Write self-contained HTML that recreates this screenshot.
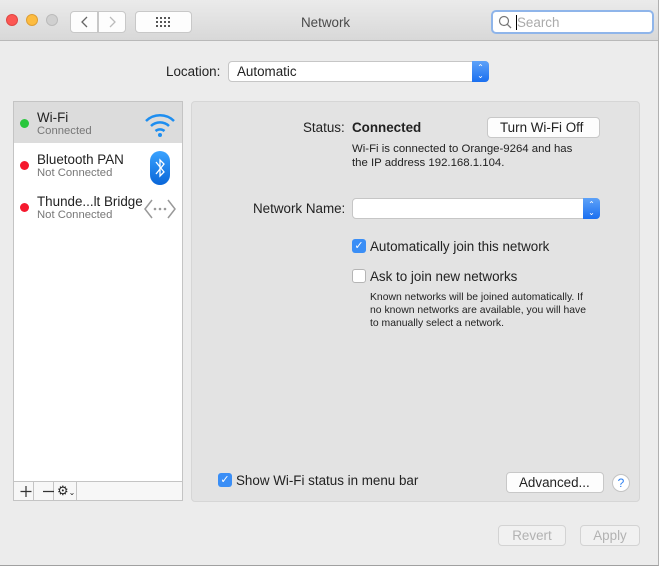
<!DOCTYPE html>
<html><head><style>
*{box-sizing:border-box;margin:0;padding:0}
body{width:665px;height:567px;background:#fff;font-family:"Liberation Sans",sans-serif;font-size:13.4px;color:#222;position:relative;overflow:hidden}
.win{position:absolute;left:0;top:0;width:659px;height:566px;background:#ececec;border-right:1px solid #b0b0b0;border-bottom:1px solid #a0a0a0;overflow:hidden}
.tb{position:absolute;left:0;top:0;width:100%;height:41px;background:linear-gradient(#ebebeb,#d8d8d8);border-bottom:1px solid #b9b9b9}
.dot{position:absolute;top:14px;width:12px;height:12px;border-radius:50%}
.btn{position:absolute;background:#fdfdfd;border:1px solid #c8c8c8;border-radius:4px}
.a{position:absolute;white-space:nowrap}
.cb{position:absolute;width:14px;height:14px;border-radius:3px}
</style></head><body><div class="win">
<div class="tb">
<div class="dot" style="left:6px;background:#fc5753;border:1px solid #df4744"></div>
<div class="dot" style="left:26px;background:#fdbc40;border:1px solid #de9f34"></div>
<div class="dot" style="left:46px;background:#d0d0d0;border:1px solid #bbb"></div>
<div class="btn" style="left:70px;top:11px;width:28px;height:22px;border-radius:4px 0 0 4px"></div>
<div class="btn" style="left:98px;top:11px;width:28px;height:22px;border-radius:0 4px 4px 0"></div>
<svg class="a" style="left:70px;top:11px" width="56" height="22"><path d="M17 6 L12 11 L17 16" fill="none" stroke="#666" stroke-width="1.3"/><path d="M40 6 L45 11 L40 16" fill="none" stroke="#bbb" stroke-width="1.3"/></svg>
<div class="btn" style="left:135px;top:11px;width:57px;height:22px"></div>
<svg class="a" style="left:155px;top:16px" width="16" height="12" fill="#555"><rect x="1" y="1" width="2" height="2"/><rect x="5" y="1" width="2" height="2"/><rect x="9" y="1" width="2" height="2"/><rect x="13" y="1" width="2" height="2"/><rect x="1" y="5" width="2" height="2"/><rect x="5" y="5" width="2" height="2"/><rect x="9" y="5" width="2" height="2"/><rect x="13" y="5" width="2" height="2"/><rect x="1" y="9" width="2" height="2"/><rect x="5" y="9" width="2" height="2"/><rect x="9" y="9" width="2" height="2"/><rect x="13" y="9" width="2" height="2"/></svg>
<div class="a" style="left:301px;top:15px;color:#4a4a4a">Network</div>
<div class="a" style="left:491px;top:10px;width:163px;height:24px;background:#fff;border:2px solid #8fb5ea;border-radius:5px"></div>
<svg class="a" style="left:498px;top:15px" width="14" height="14"><circle cx="6" cy="6" r="4.5" fill="none" stroke="#777" stroke-width="1.2"/><line x1="9.3" y1="9.3" x2="13" y2="13" stroke="#777" stroke-width="1.3"/></svg>
<div class="a" style="left:516px;top:15px;width:1px;height:15px;background:#000"></div>
<div class="a" style="left:517px;top:15px;color:#aaa">Search</div>
</div>
<div class="a" style="left:166px;top:64px">Location:</div>
<div class="a" style="left:228px;top:61px;width:261px;height:21px;background:#fff;border:1px solid #c6c6c6;border-radius:4px"></div>
<div class="a" style="left:237px;top:64px">Automatic</div>
<div class="a" style="left:472px;top:61px;width:17px;height:21px;background:linear-gradient(#5ea2f8,#1a6ff0);border-radius:0 4px 4px 0;color:#fff;font-size:8px;text-align:center;line-height:8px;padding-top:3px">⌃<br>⌄</div>

<div class="a" style="left:13px;top:101px;width:170px;height:400px;background:#fff;border:1px solid #c4c4c4"></div>
<div class="a" style="left:14px;top:102px;width:168px;height:41px;background:#dcdcdc"></div>
<div class="dot" style="left:20px;top:119px;width:9px;height:9px;background:#29c63d"></div>
<div class="a" style="left:37px;top:110px">Wi-Fi</div><div class="a" style="left:37px;top:125px;font-size:11.3px;color:#777">Connected</div>
<svg class="a" style="left:144px;top:112px" width="32" height="26"><g fill="none" stroke="#1e8ef0" stroke-width="2.5"><path d="M2 9 A20 20 0 0 1 30 9"/><path d="M7 14 A13 13 0 0 1 25 14"/><path d="M11.5 19 A7 7 0 0 1 20.5 19"/></g><circle cx="16" cy="23" r="2" fill="#1e8ef0"/></svg>
<div class="dot" style="left:20px;top:161px;width:9px;height:9px;background:#f5192e"></div>
<div class="a" style="left:37px;top:152px">Bluetooth PAN</div><div class="a" style="left:37px;top:167px;font-size:11.3px;color:#777">Not Connected</div>
<div class="a" style="left:150px;top:151px;width:20px;height:34px;border-radius:10px;background:linear-gradient(#3aa3ff,#0a66d8)"></div>
<svg class="a" style="left:150px;top:151px" width="20" height="34"><path d="M6 11 L14 21 L10 25 L10 9 L14 13 L6 23" fill="none" stroke="#fff" stroke-width="1.3"/></svg>
<div class="dot" style="left:20px;top:203px;width:9px;height:9px;background:#f5192e"></div>
<div class="a" style="left:37px;top:194px">Thunde...lt Bridge</div><div class="a" style="left:37px;top:209px;font-size:11.3px;color:#777">Not Connected</div>
<svg class="a" style="left:143px;top:197px" width="34" height="24"><path d="M9 3 L2 12 L9 21 M25 3 L32 12 L25 21" fill="none" stroke="#999" stroke-width="1.5"/><circle cx="12" cy="12" r="1.3" fill="#999"/><circle cx="17" cy="12" r="1.3" fill="#999"/><circle cx="22" cy="12" r="1.3" fill="#999"/></svg>
<div class="a" style="left:13px;top:481px;width:170px;height:20px;background:#f7f7f7;border:1px solid #c4c4c4"></div>
<div class="a" style="left:33px;top:482px;width:1px;height:18px;background:#c4c4c4"></div>
<div class="a" style="left:53px;top:482px;width:1px;height:18px;background:#c4c4c4"></div>
<div class="a" style="left:76px;top:482px;width:1px;height:18px;background:#c4c4c4"></div>
<svg class="a" style="left:14px;top:482px" width="62" height="18"><path d="M12 4 V15 M6.5 9.5 H17.5 M29 9.5 H40" stroke="#333" stroke-width="1.2"/></svg>
<div class="a" style="left:57px;top:483px;font-size:13px">⚙<span style="font-size:8px">⌄</span></div>

<div class="a" style="left:191px;top:101px;width:449px;height:401px;background:#e3e3e3;border:1px solid #d6d6d6;border-radius:4px"></div>
<div class="a" style="left:303px;top:120px">Status:</div>
<div class="a" style="left:352px;top:120px;font-weight:bold">Connected</div>
<div class="btn" style="left:487px;top:117px;width:113px;height:21px"></div>
<div class="a" style="left:500px;top:120px">Turn Wi-Fi Off</div>
<div class="a" style="left:352px;top:142px;font-size:11.4px;line-height:14px">Wi-Fi is connected to Orange-9264 and has<br>the IP address 192.168.1.104.</div>
<div class="a" style="left:253px;top:201px">Network Name:</div>
<div class="a" style="left:352px;top:198px;width:248px;height:21px;background:#fff;border:1px solid #c6c6c6;border-radius:4px"></div>
<div class="a" style="left:583px;top:198px;width:17px;height:21px;background:linear-gradient(#5ea2f8,#1a6ff0);border-radius:0 4px 4px 0;color:#fff;font-size:8px;text-align:center;line-height:8px;padding-top:3px">⌃<br>⌄</div>
<div class="cb" style="left:352px;top:239px;background:#3a8ef6;color:#fff;font-size:11px;text-align:center;line-height:14px">✓</div>
<div class="a" style="left:370px;top:239px">Automatically join this network</div>
<div class="cb" style="left:352px;top:269px;background:#fff;border:1px solid #b5b5b5"></div>
<div class="a" style="left:370px;top:269px">Ask to join new networks</div>
<div class="a" style="left:370px;top:291px;font-size:10.4px;line-height:13px">Known networks will be joined automatically. If<br>no known networks are available, you will have<br>to manually select a network.</div>
<div class="cb" style="left:218px;top:473px;background:#3a8ef6;color:#fff;font-size:11px;text-align:center;line-height:14px">✓</div>
<div class="a" style="left:236px;top:473px">Show Wi-Fi status in menu bar</div>
<div class="btn" style="left:506px;top:472px;width:98px;height:21px"></div>
<div class="a" style="left:519px;top:475px">Advanced...</div>
<div class="a" style="left:612px;top:474px;width:18px;height:18px;border-radius:50%;background:#fff;border:1px solid #c4c4c4;color:#2a7ef0;font-size:12px;text-align:center;line-height:16px">?</div>
<div class="a" style="left:498px;top:525px;width:68px;height:21px;border:1px solid #d3d3d3;border-radius:4px;background:#f1f1f1;color:#b2b2b2;text-align:center;line-height:19px">Revert</div>
<div class="a" style="left:580px;top:525px;width:60px;height:21px;border:1px solid #d3d3d3;border-radius:4px;background:#f1f1f1;color:#b2b2b2;text-align:center;line-height:19px">Apply</div>
</div></body></html>
